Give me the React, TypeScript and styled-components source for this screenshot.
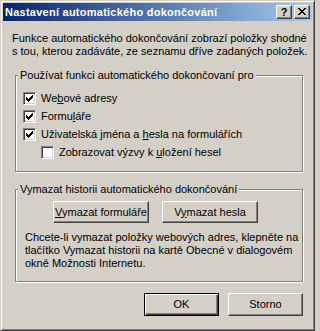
import styled, { createGlobalStyle } from "styled-components";

const GlobalStyle = createGlobalStyle`
  html, body {
    margin: 0;
    padding: 0;
    background: #d4d0c8;
  }

  body {
    color: #000;
    font-family: "Liberation Sans", Arial, sans-serif;
    font-size: 11px;
  }

  * {
    box-sizing: border-box;
  }
`;

const Window = styled.div`
  background: #d4d0c8;
  border: 1px solid;
  border-color: #d4d0c8 #404040 #404040 #d4d0c8;
  box-shadow: inset 1px 1px #fff, inset -1px -1px #808080;
  display: flex;
  flex-direction: column;
  height: 331px;
  padding: 2px;
  width: 315px;
`;

const TitleBar = styled.div`
  align-items: center;
  background: linear-gradient(to right, #0a246a, #a6caf0);
  display: flex;
  flex: none;
  height: 18px;
  padding: 0 2px;
`;

const Caption = styled.span`
  color: #fff;
  flex: 1;
  font-size: 11px;
  font-weight: bold;
  letter-spacing: 0.25px;
  line-height: 13px;
  white-space: nowrap;
`;

const CaptionButtons = styled.div`
  display: flex;
  gap: 2px;
`;

const CaptionButton = styled.button`
  align-items: center;
  background: #d4d0c8;
  border: 1px solid;
  border-color: #fff #404040 #404040 #fff;
  box-shadow: inset -1px -1px #808080;
  color: #000;
  display: flex;
  font-family: "Liberation Sans", Arial, sans-serif;
  font-size: 11px;
  font-weight: bold;
  height: 14px;
  justify-content: center;
  line-height: 10px;
  margin: 0;
  padding: 0 0 1px 0;
  width: 16px;
`;

const Body = styled.div`
  display: flex;
  flex-direction: column;
  padding: 11px 9px 0 9px;
`;

const Text = styled.p<{ $indent?: number }>`
  line-height: 13px;
  margin: 0 0 0 ${({ $indent }) => $indent ?? 0}px;
  white-space: nowrap;
`;

const Group = styled.fieldset<{ $top: number; $bottom: number }>`
  border: 1px solid #808080;
  box-shadow: inset 1px 1px #fff, 1px 1px #fff;
  margin: ${({ $top }) => $top}px 0 0 3px;
  min-width: 0;
  padding: 0 8px ${({ $bottom }) => $bottom}px 2px;
`;

const Legend = styled.legend`
  background: #d4d0c8;
  line-height: 13px;
  padding: 0 2px;
  white-space: nowrap;
`;

const GroupContent = styled.div<{ $top: number }>`
  display: flex;
  flex-direction: column;
  padding: ${({ $top }) => $top}px 0 0 5px;
`;

const CheckRow = styled.label<{ $indent?: number }>`
  align-items: center;
  display: flex;
  gap: 5px;
  height: 18px;
  line-height: 13px;
  padding-left: ${({ $indent }) => $indent ?? 0}px;
  white-space: nowrap;
`;

const Box = styled.span`
  align-items: center;
  background: #fff;
  border: 1px solid;
  border-color: #808080 #fff #fff #808080;
  box-shadow: inset 1px 1px #404040, inset -1px -1px #d4d0c8;
  display: flex;
  flex: none;
  height: 13px;
  justify-content: center;
  width: 13px;
`;

const ButtonRow = styled.div`
  display: flex;
  gap: 13px;
  padding-left: 30px;
`;

const PushButton = styled.button<{ $width: number; $height: number; $default?: boolean }>`
  background: #d4d0c8;
  border: 1px solid;
  border-color: ${({ $default }) => ($default ? "#000" : "#fff #404040 #404040 #fff")};
  box-shadow: ${({ $default }) =>
    $default
      ? "inset 1px 1px #fff, inset -1px -1px #404040, inset -2px -2px #808080"
      : "inset -1px -1px #808080"};
  color: #000;
  font-family: "Liberation Sans", Arial, sans-serif;
  font-size: 11px;
  height: ${({ $height }) => $height}px;
  line-height: 13px;
  margin: 0;
  padding: 0;
  width: ${({ $width }) => $width}px;
`;

const Spacer = styled.div`
  height: 8px;
`;

const Footer = styled.div`
  display: flex;
  gap: 9px;
  justify-content: flex-end;
  margin-top: 11px;
`;

const checkPixels: [number, number, number][] = [
  [6, 0, 1],
  [5, 1, 2],
  [0, 2, 1],
  [4, 2, 3],
  [0, 3, 2],
  [3, 3, 3],
  [0, 4, 5],
  [1, 5, 3],
  [2, 6, 1],
];

const CheckMark = () => (
  <svg width="7" height="7" viewBox="0 0 7 7" shapeRendering="crispEdges">
    {checkPixels.map(([x, y, w]) => (
      <rect key={`${x}-${y}`} x={x} y={y} width={w} height={1} fill="#000" />
    ))}
  </svg>
);

const closePixels = [
  [0, 0], [6, 0],
  [1, 1], [5, 1],
  [2, 2], [4, 2],
  [3, 3],
  [2, 4], [4, 4],
  [1, 5], [5, 5],
  [0, 6], [6, 6],
];

const CloseGlyph = () => (
  <svg width="8" height="7" viewBox="0 0 8 7" shapeRendering="crispEdges">
    {closePixels.map(([x, y]) => (
      <rect key={`${x}-${y}`} x={x} y={y} width={2} height={1} fill="#000" />
    ))}
  </svg>
);

const Checkbox = ({ checked, indent, children }: { checked: boolean; indent?: number; children: React.ReactNode }) => (
  <CheckRow $indent={indent}>
    <Box>{checked && <CheckMark />}</Box>
    <span>{children}</span>
  </CheckRow>
);

export default function App() {
  return (
    <>
      <GlobalStyle />
      <Window>
        <TitleBar>
          <Caption>Nastavení automatického dokončování</Caption>
          <CaptionButtons>
            <CaptionButton type="button">?</CaptionButton>
            <CaptionButton type="button">
              <CloseGlyph />
            </CaptionButton>
          </CaptionButtons>
        </TitleBar>
        <Body>
          <Text>Funkce automatického dokončování zobrazí položky shodné</Text>
          <Text>s tou, kterou zadáváte, ze seznamu dříve zadaných položek.</Text>

          <Group $top={11} $bottom={10}>
            <Legend>Používat funkci automatického dokončovaní pro</Legend>
            <GroupContent $top={7}>
              <Checkbox checked>
                We<u>b</u>ové adresy
              </Checkbox>
              <Checkbox checked>
                Formu<u>l</u>áře
              </Checkbox>
              <Checkbox checked>
                Uživatelská jména a <u>h</u>esla na formulářích
              </Checkbox>
              <Checkbox checked={false} indent={18}>
                Zobrazovat výzvy k <u>u</u>ložení hesel
              </Checkbox>
            </GroupContent>
          </Group>

          <Group $top={11} $bottom={11}>
            <Legend>Vymazat historii automatického dokončování</Legend>
            <GroupContent $top={5}>
              <ButtonRow>
                <PushButton type="button" $width={96} $height={22}>
                  <u>V</u>ymazat formuláře
                </PushButton>
                <PushButton type="button" $width={96} $height={22}>
                  V<u>y</u>mazat hesla
                </PushButton>
              </ButtonRow>
              <Spacer />
              <Text $indent={2}>Chcete-li vymazat položky webových adres, klepněte na</Text>
              <Text $indent={2}>tlačítko Vymazat historii na kartě Obecné v dialogovém</Text>
              <Text $indent={2}>okně Možnosti Internetu.</Text>
            </GroupContent>
          </Group>

          <Footer>
            <PushButton type="button" $width={75} $height={23} $default>
              OK
            </PushButton>
            <PushButton type="button" $width={75} $height={23}>
              Storno
            </PushButton>
          </Footer>
        </Body>
      </Window>
    </>
  );
}
